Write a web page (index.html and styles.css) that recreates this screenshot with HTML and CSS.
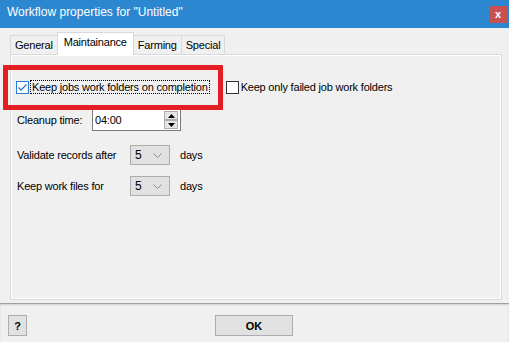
FILE: index.html
```html
<!DOCTYPE html>
<html lang="en">
  <head>
    <meta charset="utf-8" />
    <link rel="stylesheet" href="styles.css">
    <title>Workflow properties</title>
  </head>
  <body>
    <div class="window">
      <header class="titlebar">
        <span class="title">Workflow properties for "Untitled"</span>
        <button class="close" type="button">x</button>
      </header>

      <div class="content">
        <nav class="tabs">
          <span class="tab">General</span>
          <span class="tab active">Maintainance</span>
          <span class="tab">Farming</span>
          <span class="tab">Special</span>
        </nav>

        <section class="page">
          <div class="checks">
            <label class="check">
              <span class="box checked">
                <svg width="11" height="11" viewBox="0 0 11 11">
                  <polyline points="1.5,5.5 4,8 9.5,2.5" fill="none" stroke="#2b7bd6" stroke-width="1.3" />
                </svg>
              </span>
              <span class="focus">Keep jobs work folders on completion</span>
            </label>
            <label class="check">
              <span class="box"></span>
              <span>Keep only failed job work folders</span>
            </label>
          </div>

          <div class="row cleanup">
            <span class="label">Cleanup time:</span>
            <div class="spin">
              <span class="value">04:00</span>
              <div class="spin-buttons">
                <span class="spin-btn">
                  <svg width="7" height="4" viewBox="0 0 7 4"><polygon points="0,4 3.5,0 7,4" fill="#000" /></svg>
                </span>
                <span class="spin-btn">
                  <svg width="7" height="4" viewBox="0 0 7 4"><polygon points="0,0 3.5,4 7,0" fill="#000" /></svg>
                </span>
              </div>
            </div>
          </div>

          <div class="row validate">
            <span class="label wide">Validate records after</span>
            <div class="combo">
              <span>5</span>
              <svg width="9" height="5" viewBox="0 0 9 5"><polyline points="0.5,0.5 4.5,4.5 8.5,0.5" fill="none" stroke="#888" /></svg>
            </div>
            <span class="unit">days</span>
          </div>

          <div class="row">
            <span class="label wide">Keep work files for</span>
            <div class="combo">
              <span>5</span>
              <svg width="9" height="5" viewBox="0 0 9 5"><polyline points="0.5,0.5 4.5,4.5 8.5,0.5" fill="none" stroke="#888" /></svg>
            </div>
            <span class="unit">days</span>
          </div>

          <div class="highlight"></div>
        </section>
      </div>

      <footer class="footer">
        <button class="btn help" type="button">?</button>
        <button class="btn ok" type="button">OK</button>
      </footer>
    </div>
  </body>
</html>
```

FILE: styles.css
```css
* {
  box-sizing: border-box;
}

html {
  font-family: "Liberation Sans", Arial, sans-serif;
  font-size: 11px;
  letter-spacing: -0.2px;
}

body {
  margin: 0;
  background: #f0f0f0;
}

.window {
  width: 509px;
  height: 342px;
  display: flex;
  flex-direction: column;
  background: #f0f0f0;
  color: #000;
}

.titlebar {
  height: 28px;
  background: #2b88d0;
  display: flex;
  align-items: center;
  justify-content: space-between;
  padding: 0 2px 4px 7px;
}

.title {
  color: #fff;
  font-size: 12px;
  letter-spacing: 0;
}

.close {
  width: 18px;
  height: 17px;
  margin-top: 4px;
  border: 0;
  padding: 0;
  background: #c75050;
  color: #fff;
  font: bold 11px "Liberation Sans", sans-serif;
}

.content {
  padding: 4px 7px 0 10px;
  height: 275px;
}

/* tab strip sits flush on the page border */
.tabs {
  display: flex;
  align-items: flex-end;
  height: 22px;
}

.tab {
  height: 19px;
  padding: 3px 4px 0;
  border: 1px solid #d9d9d9;
  border-bottom: 0;
  border-right: 0;
  background: #f0f0f0;
  white-space: nowrap;
}

.tab:last-child {
  border-right: 1px solid #d9d9d9;
}

.tab.active {
  height: 23px;
  margin-bottom: -1px;
  padding: 3px 6px 0;
  background: #fff;
  border-right: 1px solid #d9d9d9;
  position: relative;
  z-index: 1;
}

.tab.active + .tab {
  border-left: 0;
}

.page {
  position: relative;
  height: 246px;
  border: 1px solid #d9d9d9;
  box-shadow: inset 1px 1px 0 #fff, inset -1px -1px 0 #fff;
  padding: 25px 5px 0;
}

.checks {
  display: flex;
  gap: 17px;
  height: 14px;
}

.check {
  display: flex;
  align-items: center;
  gap: 2px;
}

.box {
  width: 13px;
  height: 13px;
  border: 1px solid #333;
  background: #fff;
  display: flex;
  align-items: center;
  justify-content: center;
}

.box.checked {
  border-color: #2b7bd6;
}

.focus {
  outline: 1px dotted #000;
  padding: 0 1px;
}

.row {
  display: flex;
  align-items: center;
  height: 20px;
  margin-top: 11px;
}

.row.cleanup {
  height: 22px;
  margin-top: 15px;
}

.row.validate {
  margin-top: 14px;
}

.label {
  width: 76px;
  padding-left: 1px;
}

.label.wide {
  width: 114px;
}

.spin {
  width: 89px;
  height: 22px;
  background: #fff;
  border: 1px solid #7a7a7a;
  display: flex;
  align-items: center;
  justify-content: space-between;
  padding: 0 2px 0 2px;
}

.spin-buttons {
  display: flex;
  flex-direction: column;
}

.spin-btn {
  width: 14px;
  height: 9px;
  background: #e6e6e6;
  border: 1px solid #adadad;
  display: flex;
  align-items: center;
  justify-content: center;
}

.combo {
  width: 40px;
  height: 20px;
  background: #e1e1e1;
  border: 1px solid #adadad;
  display: flex;
  align-items: center;
  justify-content: space-between;
  padding: 0 7px 0 4px;
  font-size: 12px;
}

.unit {
  margin-left: 10px;
}

.highlight {
  position: absolute;
  left: -8px;
  top: 10px;
  width: 220px;
  height: 45px;
  border: 5px solid #e41e25;
  pointer-events: none;
}

.footer {
  flex: 1;
  border-top: 1px solid #a0a0a0;
  box-shadow: inset 0 1px 2px #d0d0d0;
  display: flex;
  align-items: flex-start;
  padding: 11px 8px 0;
}

.btn {
  height: 21px;
  background: #e1e1e1;
  border: 1px solid #adadad;
  padding: 0;
  font: bold 11px "Liberation Sans", sans-serif;
}

.help {
  width: 19px;
}

.ok {
  width: 78px;
  margin-left: 188px;
}
```
